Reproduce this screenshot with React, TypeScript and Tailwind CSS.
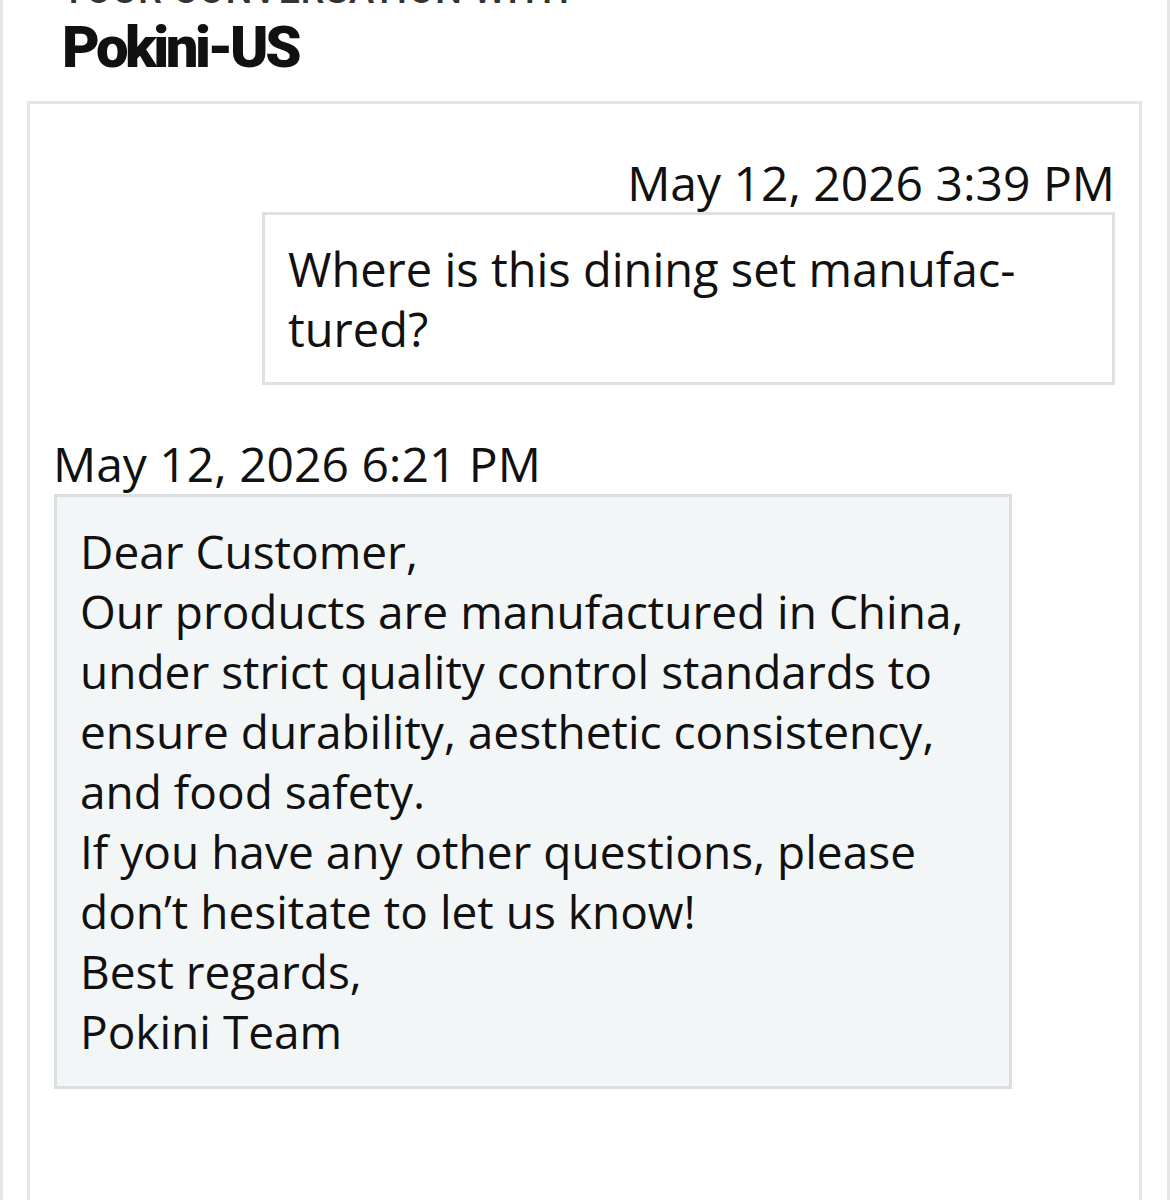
export default function App() {
  const reply = [
    "Dear Customer,",
    "Our products are manufactured in China,",
    "under strict quality control standards to",
    "ensure durability, aesthetic consistency,",
    "and food safety.",
    "If you have any other questions, please",
    "don\u2019t hesitate to let us know!",
    "Best regards,",
    "Pokini Team",
  ]

  return (
    <div className="h-[1200px] overflow-hidden bg-white font-['Open_Sans',sans-serif] text-[#111111]">
      <div className="flex h-full flex-col border-x-[3px] border-[#e6e6e6]">
        <div className="pl-[59px]">
          <div className="mt-[-32px] h-[44px] font-['Roboto',sans-serif] text-[38px] font-medium uppercase leading-[44px] tracking-[0.02em] text-[#333333]">
            Your conversation with
          </div>
          <h1 className="font-['Roboto',sans-serif] text-[58px] font-black leading-[70px] tracking-[-0.06em] text-[#111111]">
            Pokini-US
          </h1>
        </div>

        <div className="mt-[19px] ml-[24px] mr-[25px] flex-1 border-[3px] border-b-0 border-[#e6e6e6] px-[24px] pt-[51px]">
          {/* sent message */}
          <div className="flex flex-col items-end">
            <div className="text-[48px] leading-[56px]">May 12, 2026 3:39 PM</div>
            <div className="mt-[1px] w-[853px] border-[3px] border-[#e0e0e0] bg-white pl-[23px] pr-4 pt-[24px] pb-[23px] text-[47px] leading-[60px]">
              Where is this dining set manufac-
              <br />
              tured?
            </div>
          </div>

          {/* reply */}
          <div className="mt-[51px] flex flex-col items-start">
            <div className="ml-[-1px] text-[48px] leading-[56px]">May 12, 2026 6:21 PM</div>
            <div className="mt-[2px] w-[958px] border-[3px] border-[#dcdfe0] bg-[#f3f6f7] pl-[23px] pr-4 pt-[24px] pb-[25px] text-[46px] leading-[60px]">
              {reply.map((line, i) => (
                <div key={i}>{line}</div>
              ))}
            </div>
          </div>
        </div>
      </div>
    </div>
  )
}
